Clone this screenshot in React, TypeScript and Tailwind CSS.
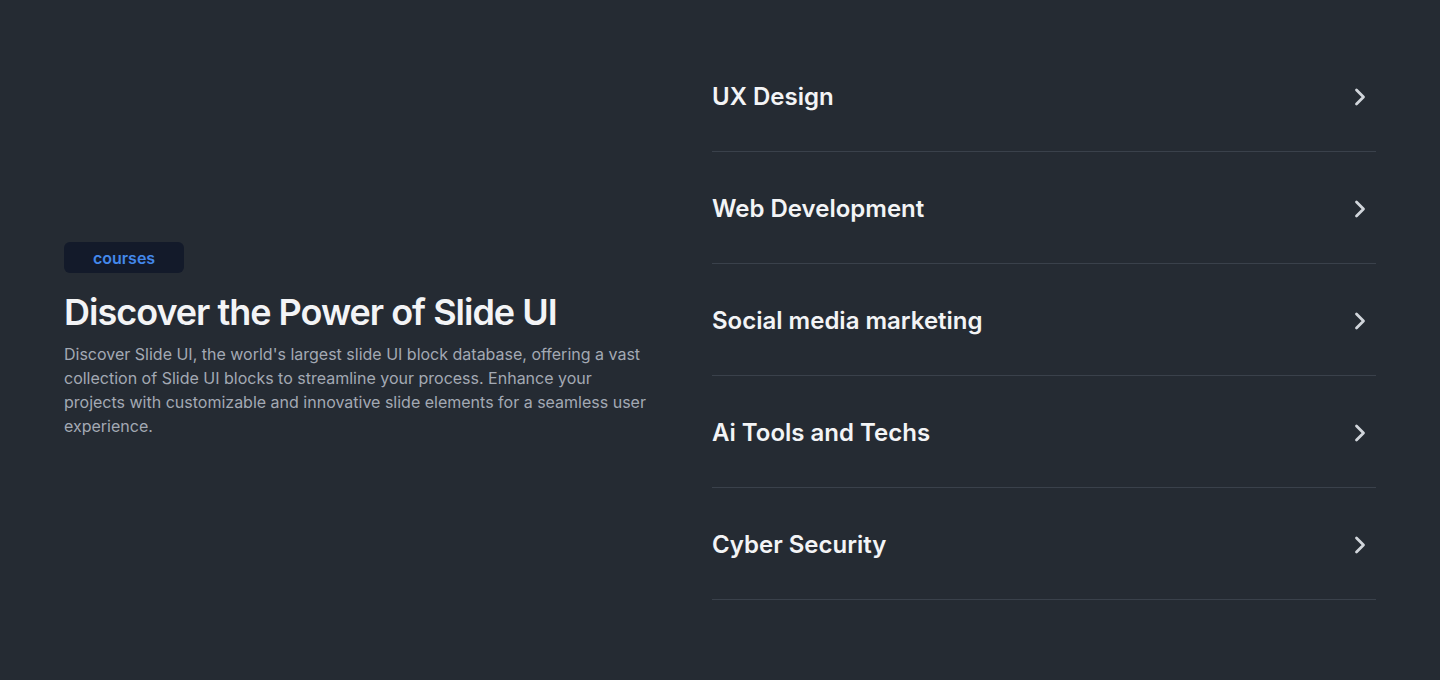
import React from 'react';
import { ChevronRight } from 'lucide-react';

const courses = ['UX Design', 'Web Development', 'Social media marketing', 'Ai Tools and Techs', 'Cyber Security'];

const App: React.FC = () => {
  return (
    <div className="min-h-[680px] w-full bg-[#252b33] font-['Inter',sans-serif]">
      <div className="flex items-center gap-16 px-16 pt-10 pb-20">
        {/* Intro */}
        <div className="flex-1 mt-[40px]">
          <span className="inline-flex h-[31px] w-[120px] items-center justify-center rounded-md bg-[#131a2a] text-base font-semibold text-[#4388ea]">
            courses
          </span>
          <h1 className="mt-[17px] text-4xl font-semibold tracking-[-0.028em] leading-[44px] text-[#f3f4f6]">
            Discover the Power of Slide UI
          </h1>
          <p className="mt-[8px] text-base leading-6 text-[#a3a9b3]">
            Discover Slide UI, the world's largest slide UI block database, offering a vast collection of Slide UI blocks
            to streamline your process. Enhance your projects with customizable and innovative slide elements for a
            seamless user experience.
          </p>
        </div>

        {/* Course list */}
        <ul className="w-[664px]">
          {courses.map((c) => (
            <li key={c} className="flex h-28 items-center justify-between border-b border-[#3a414b] pt-[3px]">
              <span className="text-2xl font-semibold text-[#f3f4f6]">{c}</span>
              <ChevronRight strokeWidth={2.4} className="mr-0.5 h-7 w-7 text-[#d1d5db]" />
            </li>
          ))}
        </ul>
      </div>
    </div>
  );
};

export default App;
